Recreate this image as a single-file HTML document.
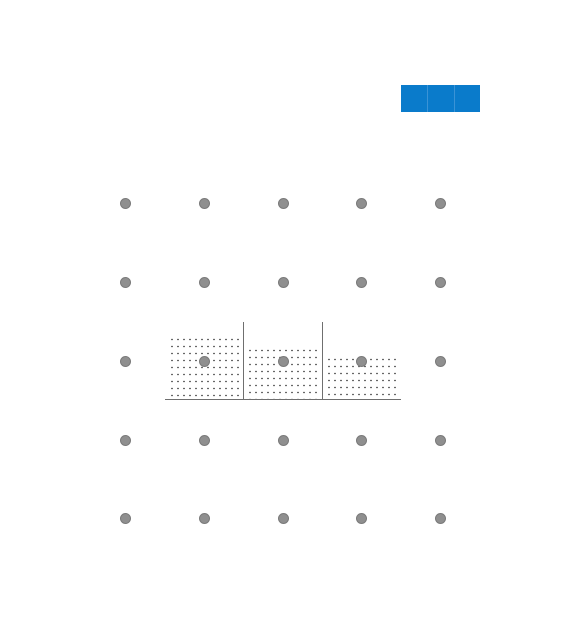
<!DOCTYPE html>
<html><head><style>
body{margin:0;width:565px;height:644px;background:#fff;position:relative;overflow:hidden;font-family:"Liberation Sans",sans-serif}
.d{position:absolute;width:11px;height:11px;border-radius:50%;background:#8f8f8f;border:0.5px solid #7a7a7a;box-sizing:border-box}
.f{position:absolute;background-image:radial-gradient(circle,#222 0.6px,transparent 0.9px);background-size:6px 7px}
.l{position:absolute;background:#6f6f6f}
</style></head><body>
<div style="position:absolute;left:401px;top:85px;width:79px;height:27px;background:#0a7bcb"></div>
<div style="position:absolute;left:427px;top:85px;width:1px;height:27px;background:#3a93d6"></div>
<div style="position:absolute;left:454px;top:85px;width:1px;height:27px;background:#3a93d6"></div>
<div class="f" style="left:169px;top:336px;width:72px;height:63px"></div>
<div class="f" style="left:247px;top:347px;width:74px;height:52px"></div>
<div class="f" style="left:326px;top:356px;width:73px;height:43px"></div>
<div class="l" style="left:165px;top:399px;width:236px;height:1px"></div>
<div class="l" style="left:243px;top:322px;width:1px;height:78px"></div>
<div class="l" style="left:322px;top:322px;width:1px;height:78px"></div>
<div id="g"></div>
<script>
var xs=[125,204,283,361,440],ys=[203,282,361,440,518],h='';
ys.forEach(function(y){xs.forEach(function(x){h+='<div class="d" style="left:'+(x-5.5)+'px;top:'+(y-5.5)+'px"></div>';});});
document.getElementById('g').innerHTML=h;
</script>
</body></html>
